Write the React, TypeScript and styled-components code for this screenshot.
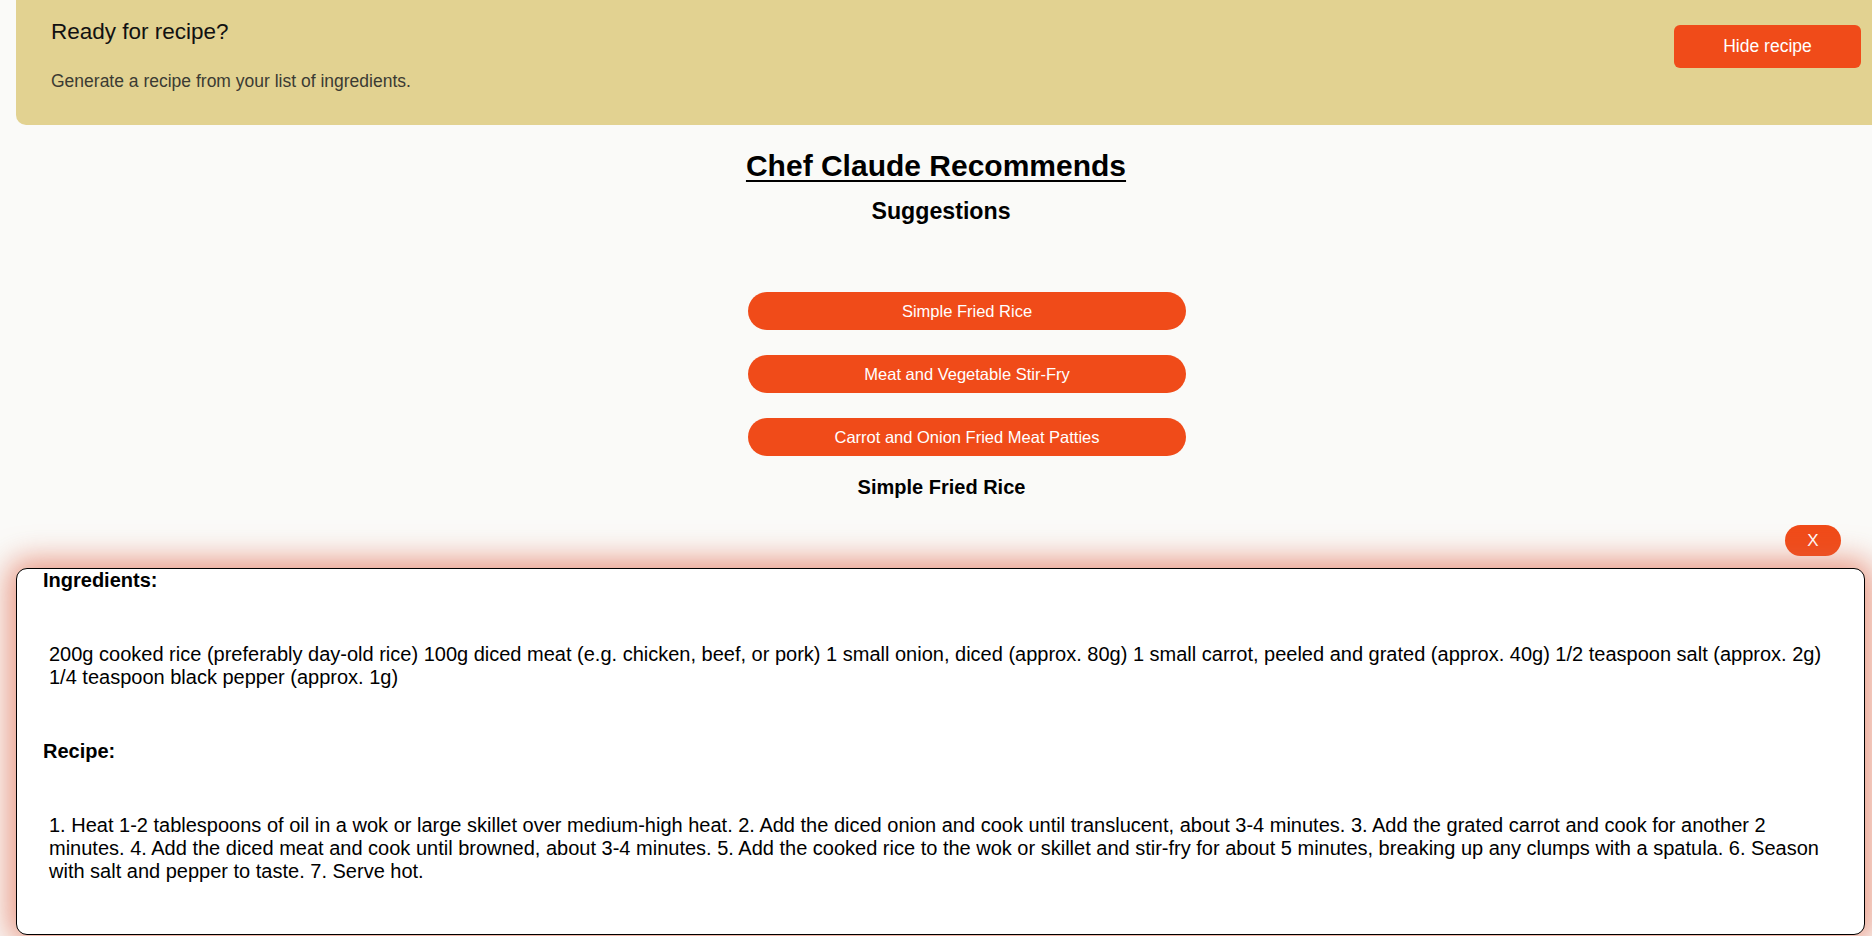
import React from "react";
import styled, { createGlobalStyle } from "styled-components";

const GlobalStyle = createGlobalStyle`
  html, body {
    margin: 0;
    padding: 0;
    background: #fafaf8;
    font-family: "Liberation Sans", Arial, sans-serif;
    color: #000;
    overflow: hidden;
  }
`;

const Page = styled.div`
  width: 1872px;
  height: 936px;
  overflow: hidden;
  display: flex;
  flex-direction: column;
`;

const Banner = styled.section`
  margin-left: 16px;
  margin-right: -20px;
  height: 125px;
  box-sizing: border-box;
  background: #e2d291;
  border-radius: 0 0 0 10px;
  display: flex;
  justify-content: space-between;
  align-items: flex-start;
  padding: 0 31px 0 35px;
`;

const BannerText = styled.div`
  display: flex;
  flex-direction: column;
`;

const BannerTitle = styled.h3`
  margin: 19px 0 0;
  font-size: 22.5px;
  font-weight: 400;
  line-height: 26px;
  color: #111;
`;

const BannerSub = styled.p`
  margin: 26px 0 0;
  font-size: 17.5px;
  line-height: 20px;
  color: #3b3b33;
`;

const HideButton = styled.button`
  margin-top: 25px;
  width: 187px;
  height: 43px;
  border: none;
  border-radius: 6px;
  background: #f04b19;
  color: #fff;
  font-family: "Liberation Sans", Arial, sans-serif;
  font-size: 17.5px;
  cursor: pointer;
`;

const Main = styled.main`
  display: flex;
  flex-direction: column;
  align-items: center;
`;

const Title = styled.h1`
  margin: 24px 0 0;
  font-size: 30px;
  line-height: 34px;
  font-weight: 700;
  text-decoration: underline;
  text-underline-offset: 4px;
  text-decoration-thickness: 2px;
`;

const Subtitle = styled.h2<{ $shift?: number }>`
  margin: 15px 0 0 ${(p) => (p.$shift ?? 0) * 2}px;
  font-size: 23.2px;
  line-height: 26px;
  font-weight: 700;
`;

const SuggestionList = styled.div`
  margin: 68px 0 0 62px;
  display: flex;
  flex-direction: column;
  gap: 25px;
`;

const SuggestionButton = styled.button`
  width: 438px;
  height: 38px;
  border: none;
  border-radius: 19px;
  background: #f04b19;
  color: #fff;
  font-family: "Liberation Sans", Arial, sans-serif;
  font-size: 16.5px;
  cursor: pointer;
`;

const RecipeName = styled.h3`
  margin: 20px 0 0 11px;
  font-size: 20px;
  line-height: 23px;
  font-weight: 700;
`;

const CloseRow = styled.div`
  display: flex;
  justify-content: flex-end;
  padding-right: 31px;
  margin-top: 26px;
`;

const CloseButton = styled.button`
  width: 56px;
  height: 31px;
  border: none;
  border-radius: 16px;
  background: #f04b19;
  color: #fff;
  font-family: "Liberation Sans", Arial, sans-serif;
  font-size: 17px;
  cursor: pointer;
`;

const RecipeBox = styled.article`
  margin: 12px 7px 0 16px;
  border: 1px solid #000;
  border-radius: 11px;
  background: #fff;
  box-shadow: 0 0 30px 8px rgba(224, 100, 70, 0.65);
  padding: 0 33px 49px 32px;
  display: flex;
  flex-direction: column;
  gap: 51px;
  height: 367px;
  box-sizing: border-box;
`;

const SectionHeading = styled.h4`
  margin: 0 0 0 -6px;
  font-size: 20px;
  line-height: 23px;
  font-weight: 700;
`;

const BodyText = styled.p`
  margin: 0;
  font-size: 20px;
  line-height: 23px;
`;

export default function App() {
  return (
    <>
      <GlobalStyle />
      <Page>
        <Banner>
          <BannerText>
            <BannerTitle>Ready for recipe?</BannerTitle>
            <BannerSub>Generate a recipe from your list of ingredients.</BannerSub>
          </BannerText>
          <HideButton>Hide recipe</HideButton>
        </Banner>
        <Main>
          <Title>Chef Claude Recommends</Title>
          <Subtitle $shift={5}>Suggestions</Subtitle>
          <SuggestionList>
            <SuggestionButton>Simple Fried Rice</SuggestionButton>
            <SuggestionButton>Meat and Vegetable Stir-Fry</SuggestionButton>
            <SuggestionButton>Carrot and Onion Fried Meat Patties</SuggestionButton>
          </SuggestionList>
          <RecipeName>Simple Fried Rice</RecipeName>
        </Main>
        <CloseRow>
          <CloseButton>X</CloseButton>
        </CloseRow>
        <RecipeBox>
          <SectionHeading>Ingredients:</SectionHeading>
          <BodyText>
            200g cooked rice (preferably day-old rice) 100g diced meat (e.g. chicken, beef, or pork) 1 small onion, diced (approx. 80g) 1 small carrot, peeled and grated (approx. 40g) 1/2 teaspoon salt (approx. 2g) 1/4 teaspoon black pepper (approx. 1g)
          </BodyText>
          <SectionHeading>Recipe:</SectionHeading>
          <BodyText>
            1. Heat 1-2 tablespoons of oil in a wok or large skillet over medium-high heat. 2. Add the diced onion and cook until translucent, about 3-4 minutes. 3. Add the grated carrot and cook for another 2 minutes. 4. Add the diced meat and cook until browned, about 3-4 minutes. 5. Add the cooked rice to the wok or skillet and stir-fry for about 5 minutes, breaking up any clumps with a spatula. 6. Season with salt and pepper to taste. 7. Serve hot.
          </BodyText>
        </RecipeBox>
      </Page>
    </>
  );
}
